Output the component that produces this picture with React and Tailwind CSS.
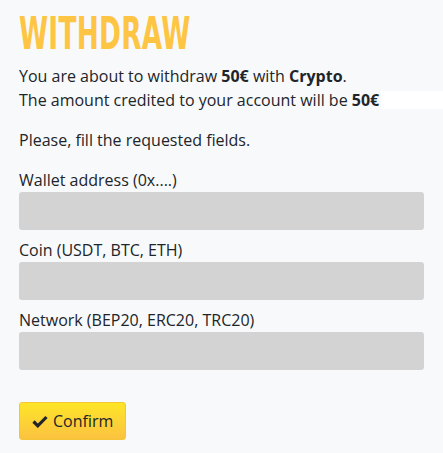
import React from "react";

const fields = [
  "Wallet address (0x....)",
  "Coin (USDT, BTC, ETH)",
  "Network (BEP20, ERC20, TRC20)",
];

const App = () => {
  return (
    <div
      className="min-h-[453px] w-full bg-[#f8f9fb] px-[19px] pt-[9px] text-[16px] text-[#212529]"
      style={{ fontFamily: '"Open Sans", "Noto Sans", sans-serif' }}
    >
      {/* Title */}
      <h1
        className="origin-left scale-x-[0.65] text-[45px] font-bold leading-[50px] tracking-[0.5px] text-[#fdc543]"
        style={{ fontFamily: '"DejaVu Sans Condensed", "DejaVu Sans", sans-serif' }}
      >
        WITHDRAW
      </h1>

      {/* Intro */}
      <div className="mt-[5px] leading-[24px]">
        <p>
          You are about to withdraw <strong>50€</strong> with{" "}
          <strong>Crypto</strong>.
        </p>
        <p className="flex">
          <span>
            The amount credited to your account will be <strong>50€</strong>
          </span>
          <span className="-mr-[19px] my-[3px] ml-[2px] flex-1 bg-white"></span>
        </p>
      </div>

      <p className="mt-[16px] leading-[24px]">Please, fill the requested fields.</p>

      {/* Fields */}
      <form className="mt-[16px] flex flex-col gap-[8px]">
        {fields.map((label) => (
          <div key={label}>
            <label className="block leading-[24px]">{label}</label>
            <input
              type="text"
              className="block h-[38px] w-full rounded-[3px] bg-[#d3d3d3] outline-none"
            />
          </div>
        ))}
      </form>

      {/* Confirm */}
      <button
        type="button"
        className="mt-[32px] flex h-[38px] items-center gap-[5px] rounded-[3px] border border-[#f5c533] bg-gradient-to-b from-[#fde525] to-[#fbc23f] px-[12px] text-[#212529]"
      >
        <svg width="16" height="13" viewBox="0 0 16 13">
          <path d="M1.5 6.5 L5.8 10.8 L14.5 2" fill="none" stroke="#212529" strokeWidth="3.2" />
        </svg>
        <span>Confirm</span>
      </button>
    </div>
  );
};

export default App;
